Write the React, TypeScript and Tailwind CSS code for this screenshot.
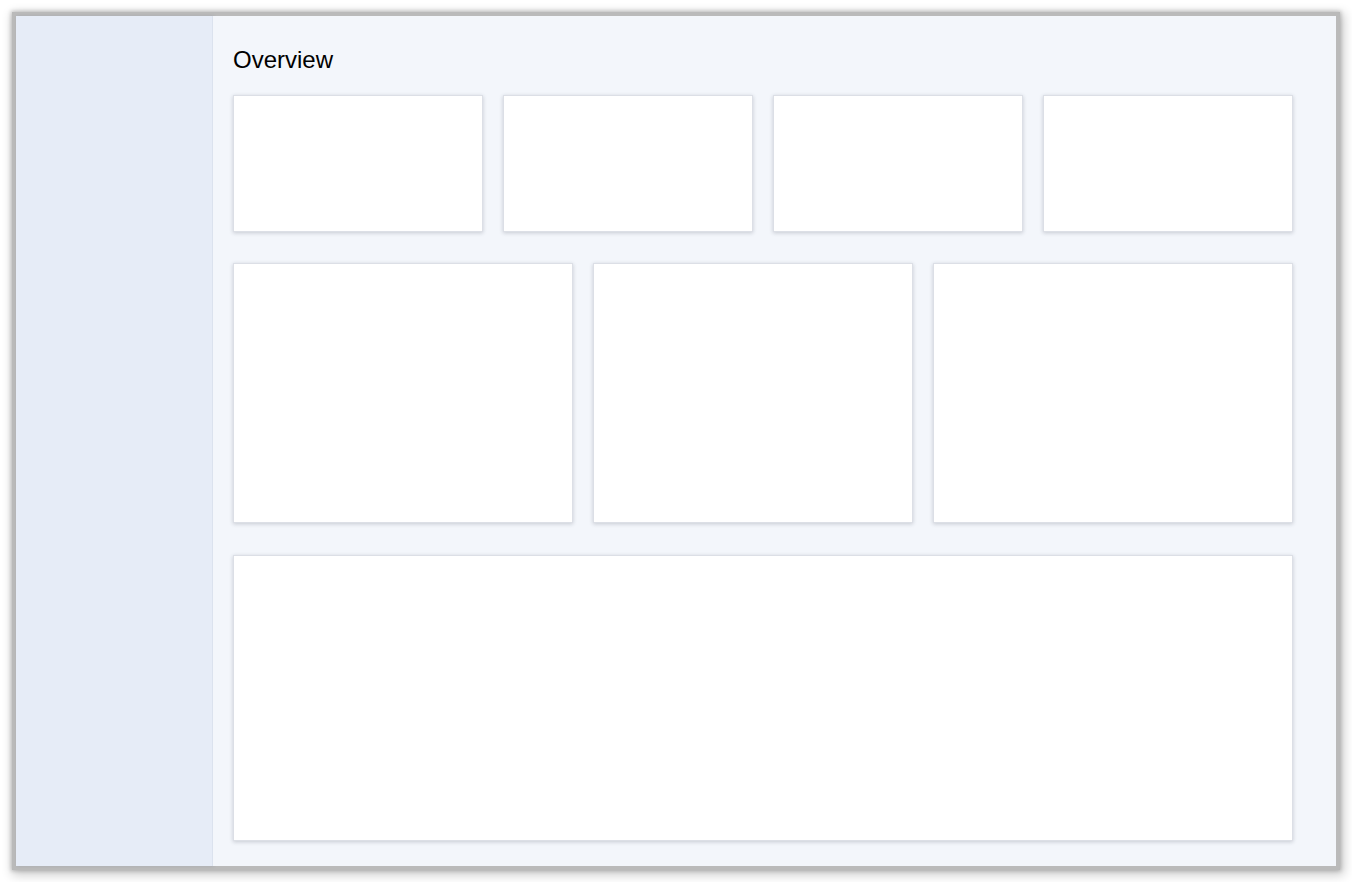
const Card = ({ className = '' }: { className?: string }) => (
  <div className={`bg-white border border-[#dcdfe6] shadow-[0_1px_4px_rgba(40,50,70,0.22)] ${className}`} />
);

export default function App() {
  return (
    <div className="w-[1352px] h-[882px] bg-white p-4" style={{ fontFamily: '"Liberation Sans", Arial, sans-serif' }}>
      <div className="flex w-[1320px] h-[850px] shadow-[0_0_0_4px_#bababa,0_0_4px_5px_rgba(0,0,0,0.2),2px_3px_10px_6px_rgba(0,0,0,0.2)]">
        {/* Sidebar */}
        <aside className="w-[197px] shrink-0 bg-[#e6ecf7] border-r border-[#dbe2ee] shadow-[1px_0_3px_rgba(60,80,120,0.14)]" />

        {/* Main */}
        <main className="flex-1 bg-[#f3f6fb] pl-5 pr-[43px] pt-8">
          <h2 className="text-2xl leading-6 text-black mb-[23px]">Overview</h2>

          <div className="grid grid-cols-4 gap-5">
            <Card className="h-[137px]" />
            <Card className="h-[137px]" />
            <Card className="h-[137px]" />
            <Card className="h-[137px]" />
          </div>

          <div className="grid grid-cols-[340px_320px_1fr] gap-5 mt-[31px]">
            <Card className="h-[260px]" />
            <Card className="h-[260px]" />
            <Card className="h-[260px]" />
          </div>

          <Card className="h-[286px] mt-8" />
        </main>
      </div>
    </div>
  );
}
